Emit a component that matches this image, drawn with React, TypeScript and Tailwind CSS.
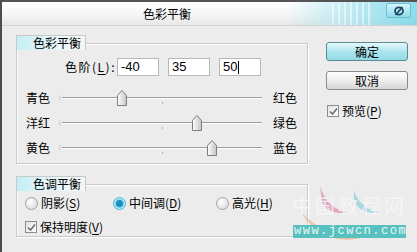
import type { ReactNode } from "react";

const FONT = "font-['Noto_Sans_CJK_SC','Noto_Sans',sans-serif]";

function U({ children }: { children: ReactNode }) {
  return <span className="underline underline-offset-[2px]">{children}</span>;
}

function GroupBox({ title, className = "", children }: { title: string; className?: string; children: ReactNode }) {
  return (
    <div className={`relative border border-[#c9c9c9] shadow-[inset_1px_1px_0_#ffffff,1px_1px_0_#ffffff] ${className}`}>
      {/* tab label sitting over the top border */}
      <div className="absolute -left-px -top-[9px] w-[70px] h-[15px] border border-b-0 border-[#c9c9c9] bg-[linear-gradient(to_right,#c6eef6,#e9f8fb_60%,#f4f4f4)] text-[12px] leading-[14px] text-black pl-[16px]">
        {title}
      </div>
      {children}
    </div>
  );
}

function Thumb() {
  return (
    <svg width="10" height="16" viewBox="0 0 10 16" className="absolute top-[-8px] -translate-x-1/2">
      <defs>
        <linearGradient id="tg" x1="0" y1="0" x2="1" y2="0">
          <stop offset="0" stopColor="#ffffff" />
          <stop offset="1" stopColor="#c4c4c4" />
        </linearGradient>
      </defs>
      <path d="M5 0.5 L9.5 5.5 L9.5 15.5 L0.5 15.5 L0.5 5.5 Z" fill="url(#tg)" stroke="#7d7d7d" />
    </svg>
  );
}

function SliderRow({ left, right, value }: { left: string; right: string; value: number }) {
  // range -100..100 over a 200px track
  const pos = value + 100;
  return (
    <div className="h-[25px] flex items-center">
      <span className="w-[37px] pl-px text-[12px]">{left}</span>
      <div className="relative w-[200px] h-[2px] border-t border-[#9c9c9c] bg-white">
        <div className="absolute left-[-3px] top-[-3px] w-[3px] h-[6px] border-l border-[#c8c8c8] rounded-l-full" />
        <div className="absolute left-[100px] top-[4px] w-px h-[2px] bg-[#b0b0b0]" />
        <div className="absolute top-0" style={{ left: `${pos}px` }}>
          <Thumb />
        </div>
      </div>
      <span className="ml-[11px] text-[12px]">{right}</span>
    </div>
  );
}

function NumBox({ value, caret }: { value: string; caret?: boolean }) {
  return (
    <div className="w-[42px] h-[18px] border border-[#b9b9b9] bg-white text-[13px] leading-[16px] pl-[3px] font-['Liberation_Sans',sans-serif] flex items-center">
      {value}
      {caret && <span className="inline-block w-px h-[13px] bg-black ml-px" />}
    </div>
  );
}

function Check({ label }: { label: ReactNode }) {
  return (
    <div className="flex items-center gap-[3px] text-[12px]">
      <div className="w-[12px] h-[12px] border border-[#8e8e8e] bg-[linear-gradient(135deg,#e2e2e2,#ffffff)] flex items-center justify-center">
        <svg width="9" height="9" viewBox="0 0 9 9">
          <path d="M1 4.5 L3.5 7 L8 1.5" fill="none" stroke="#6e6e6e" strokeWidth="1.6" />
        </svg>
      </div>
      <span>{label}</span>
    </div>
  );
}

function Radio({ label, on }: { label: ReactNode; on?: boolean }) {
  return (
    <div className="flex items-center gap-[3px] text-[12px]">
      {on ? (
        <div className="w-[13px] h-[13px] rounded-full border border-[#3fb7d8] bg-[#bfeaf5] flex items-center justify-center">
          <div className="w-[7px] h-[7px] rounded-full bg-[#1d8fc4] shadow-[0_0_0_1px_#7fd3ea]" />
        </div>
      ) : (
        <div className="w-[13px] h-[13px] rounded-full border border-[#a4a4a4] bg-[radial-gradient(circle_at_35%_35%,#ffffff,#d4d4d4)]" />
      )}
      <span>{label}</span>
    </div>
  );
}

function Btn({ children, primary }: { children: ReactNode; primary?: boolean }) {
  return (
    <div
      className={`w-[82px] h-[19px] rounded-[3px] border text-[12px] leading-[17px] text-center ${
        primary
          ? "border-[#5a8a94] bg-[linear-gradient(to_bottom,#e4f8fb,#a9e4ee_55%,#93dbe8)]"
          : "border-[#8a8a8a] bg-[linear-gradient(to_bottom,#ffffff,#ececec_55%,#d6d6d6)]"
      }`}
    >
      {children}
    </div>
  );
}

export default function App() {
  return (
    <div className={`relative w-[417px] h-[252px] overflow-hidden bg-[#ececec] border-l-2 border-[#4d4d4d] text-black ${FONT}`}>
      {/* title bar */}
      <div className="relative h-[26px] border-t-2 border-[#555555] border-b border-b-[#d2d2d2] bg-[linear-gradient(to_bottom,#ffffff,#f6f6f6_50%,#e8e8e8)]">
        <div className="absolute right-0 top-0 w-[130px] h-full bg-[linear-gradient(to_right,rgba(255,255,255,0),rgba(150,225,240,0.55)_45%,rgba(120,215,235,0.85))]" />
        <div className="absolute left-[330px] top-0 w-[40px] h-full bg-[repeating-linear-gradient(to_right,rgba(255,255,255,0.5)_0px,rgba(255,255,255,0.5)_2px,rgba(255,255,255,0)_2px,rgba(255,255,255,0)_6px)]" />
        <div className="pl-[141px] text-[12px] leading-[23px]">色彩平衡</div>
        <div className="absolute left-[384px] top-[1px] w-[25px] h-[15px] rounded-[2px] border border-[#6bbfd0] bg-[linear-gradient(to_bottom,#d6f5fb,#8fdbea)] flex items-center justify-center">
          <svg width="12" height="10" viewBox="0 0 12 10">
            <ellipse cx="6" cy="5" rx="4" ry="3.6" fill="none" stroke="#1f4a66" strokeWidth="1.8" />
            <path d="M9.5 1 L2.5 9" stroke="#1f4a66" strokeWidth="1.8" />
          </svg>
        </div>
      </div>

      <div className="flex">
        {/* left column */}
        <div className="pl-[14px] pt-[17px]">
          <GroupBox title="色彩平衡" className="w-[292px] h-[121px]">
            <div className="pt-[14px] pl-[8px]">
              <div className="h-[18px] flex items-center">
                <span className="w-[92px] text-right pr-[1px] text-[12px] tracking-[1.5px]">
                  色阶(<U>L</U>):
                </span>
                <div className="flex gap-[9px]">
                  <NumBox value="-40" />
                  <NumBox value="35" />
                  <NumBox value="50" caret />
                </div>
              </div>
              <div className="mt-[9px]">
                <SliderRow left="青色" right="红色" value={-40} />
                <SliderRow left="洋红" right="绿色" value={35} />
                <SliderRow left="黄色" right="蓝色" value={50} />
              </div>
            </div>
          </GroupBox>

          <GroupBox title="色调平衡" className="mt-[20px] w-[292px] h-[53px]">
            <div className="pl-[8px] pt-[10px]">
              <div className="flex items-center h-[16px]">
                <div className="w-[88px]">
                  <Radio label={<>阴影(<U>S</U>)</>} />
                </div>
                <div className="w-[103px]">
                  <Radio on label={<>中间调(<U>D</U>)</>} />
                </div>
                <Radio label={<>高光(<U>H</U>)</>} />
              </div>
              <div className="mt-[7px]">
                <Check label={<>保持明度(<U>V</U>)</>} />
              </div>
            </div>
          </GroupBox>
        </div>

        {/* right column */}
        <div className="ml-[18px] pt-[16px] flex flex-col gap-[10px]">
          <Btn primary>确定</Btn>
          <Btn>取消</Btn>
          <div className="mt-[2px] pl-[1px]">
            <Check label={<>预览(<U>P</U>)</>} />
          </div>
        </div>
      </div>

      {/* watermark */}
      <div className="absolute left-[282px] top-[182px] w-[135px] h-[70px] pointer-events-none">
        <svg width="130" height="66" viewBox="0 0 130 66" className="absolute left-0 top-0">
          <path d="M36 4 C40 16 46 26 62 30 C50 33 42 28 38 20 Z" fill="#d77aa8" opacity="0.6" />
          <path d="M70 8 C72 18 80 26 94 30 C82 33 72 26 70 18 Z" fill="#7fd0d8" opacity="0.65" />
          <path d="M16 28 C30 48 60 58 96 48 C70 64 34 62 16 28 Z" fill="#e39a5e" opacity="0.5" />
        </svg>
        <div className="absolute left-[8px] top-[13px] whitespace-nowrap text-[20px] leading-[22px] tracking-[3px] text-[#f8f8f8] opacity-80">中国教程网</div>
        <div className="absolute left-[9px] top-[43px] w-[113px] h-[13px] bg-[#58c1bf] whitespace-nowrap text-[12px] leading-[13px] tracking-[1.5px] text-[#e8f6f4] font-['Liberation_Mono',monospace] pl-px">
          www.jcwcn.com
        </div>
      </div>
    </div>
  );
}
